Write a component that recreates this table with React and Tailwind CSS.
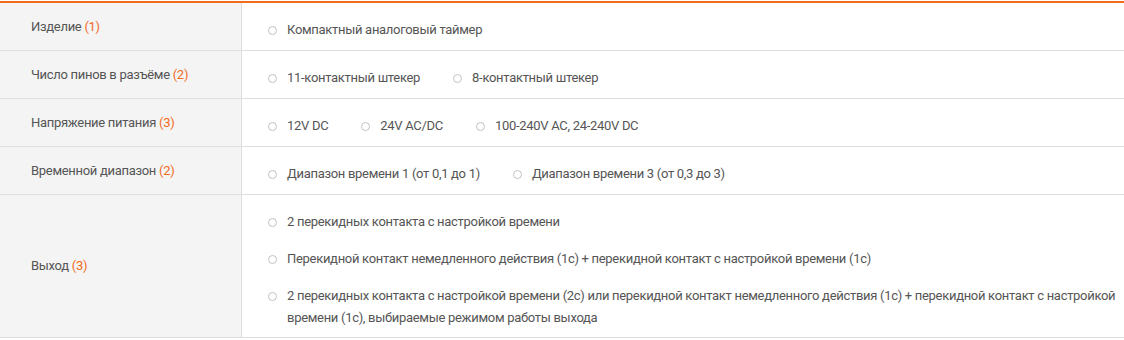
const rows = [
  { label: "Изделие", count: 1, options: ["Компактный аналоговый таймер"] },
  { label: "Число пинов в разъёме", count: 2, options: ["11-контактный штекер", "8-контактный штекер"] },
  { label: "Напряжение питания", count: 3, options: ["12V DC", "24V AC/DC", "100-240V AC, 24-240V DC"] },
  { label: "Временной диапазон", count: 2, options: ["Диапазон времени 1 (от 0,1 до 1)", "Диапазон времени 3 (от 0,3 до 3)"] },
];

const output = [
  "2 перекидных контакта с настройкой времени",
  "Перекидной контакт немедленного действия (1c) + перекидной контакт с настройкой времени (1c)",
  "2 перекидных контакта с настройкой времени (2c) или перекидной контакт немедленного действия (1c) + перекидной контакт с настройкой времени (1c), выбираемые режимом работы выхода",
];

const Radio = ({ text }) => (
  <label className="flex items-start cursor-pointer">
    <span className="mt-[7px] h-[9px] w-[9px] shrink-0 rounded-full border border-[#c2c2c2] bg-white" />
    <span className="ml-[10px]">{text}</span>
  </label>
);

const Label = ({ label, count }) => (
  <div className="flex w-[242px] shrink-0 items-center border-r border-[#dedede] bg-[#f4f4f4] pl-[31px]">
    <span>
      {label} <span className="text-[#f26b1d]">({count})</span>
    </span>
  </div>
);

export default function App() {
  return (
    <div
      className="mt-px border-t-2 border-[#f26b1d] text-[13px] leading-[22px] tracking-[-0.3px] text-[#555]"
      style={{ fontFamily: "Roboto, 'Noto Sans', sans-serif" }}
    >
      {rows.map((r) => (
        <div key={r.label} className="flex border-b border-[#dedede]">
          <Label label={r.label} count={r.count} />
          <div className="flex flex-1 gap-[33px] pl-[26px] pt-[16px] pb-[9px]">
            {r.options.map((o) => (
              <Radio key={o} text={o} />
            ))}
          </div>
        </div>
      ))}
      <div className="flex border-b border-[#dedede]">
        <Label label="Выход" count={3} />
        <div className="flex flex-1 flex-col gap-[15px] pl-[26px] pr-2 pt-[16px] pb-[8px]">
          {output.map((o) => (
            <Radio key={o} text={o} />
          ))}
        </div>
      </div>
    </div>
  );
}
